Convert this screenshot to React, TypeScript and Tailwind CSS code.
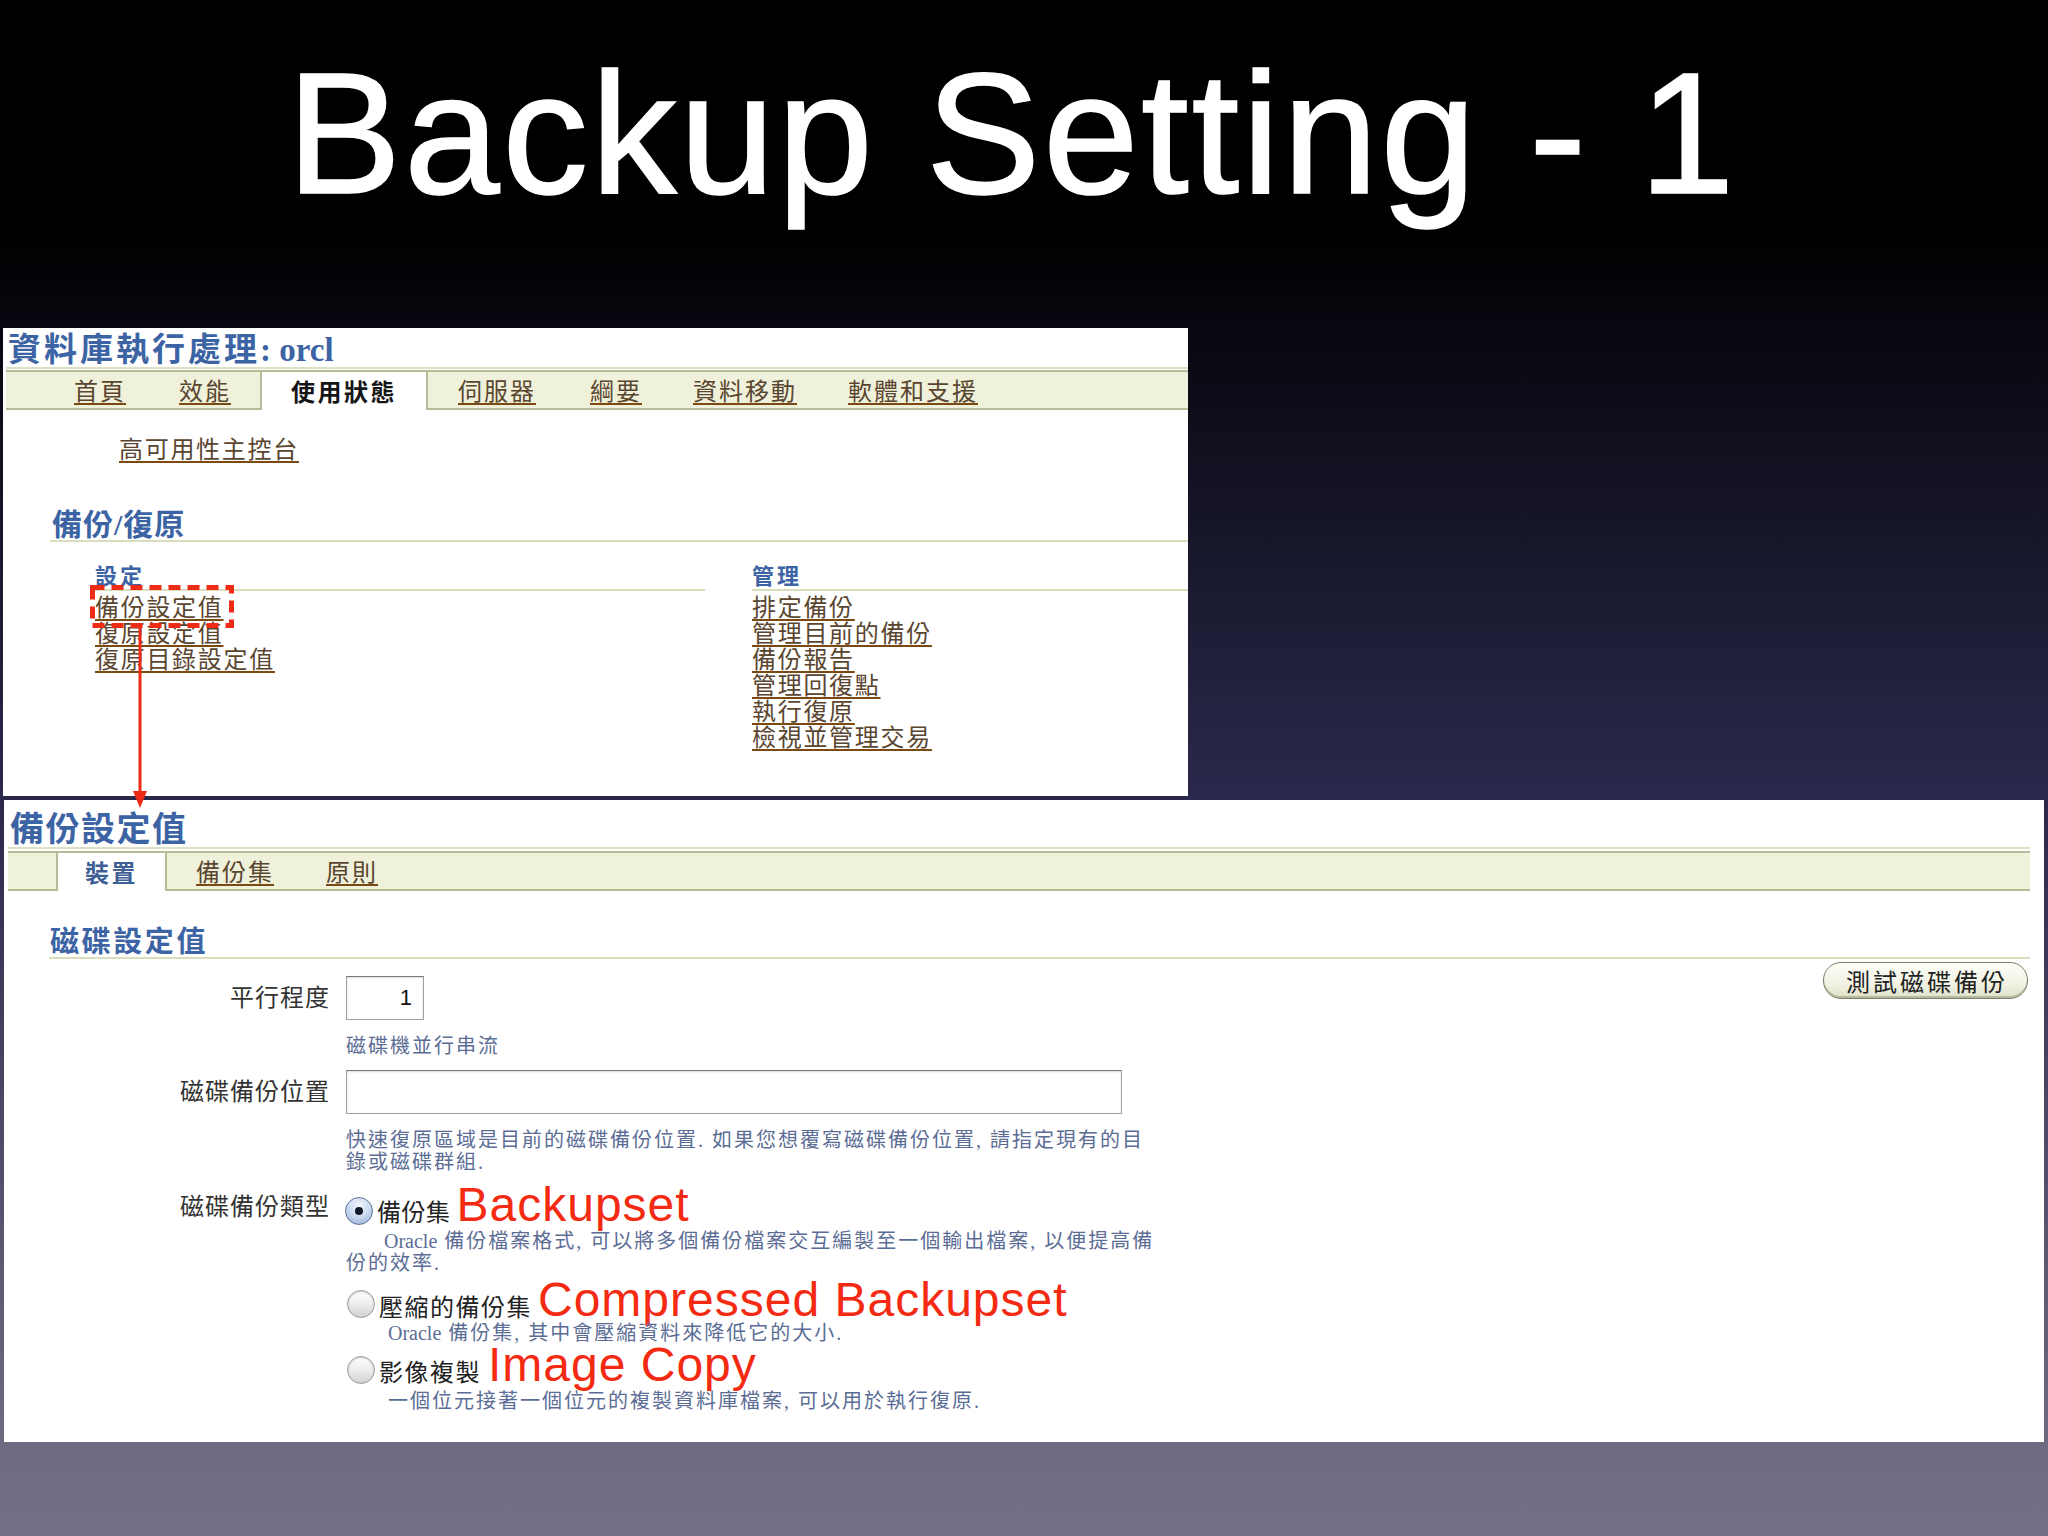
import React from 'react';

// ==================== SMALL PIECES ====================
function Link({ children }: { children: React.ReactNode }) {
  return (
    <span className="text-[#5a4630] underline decoration-[#7b4a13] decoration-[1.5px] underline-offset-[3px]">
      {children}
    </span>
  );
}

function Radio({ checked = false, className = '' }: { checked?: boolean; className?: string }) {
  if (checked) {
    return (
      <span
        className={`self-end w-[28px] h-[28px] shrink-0 rounded-full border border-[#5d7598] bg-[radial-gradient(circle_at_50%_30%,#f4f8ff_0%,#c4d5ee_55%,#8eaad3_100%)] flex items-center justify-center ${className}`}
      >
        <span className="w-[8px] h-[8px] rounded-full bg-[#111827]" />
      </span>
    );
  }
  return (
    <span
      className={`self-end w-[28px] h-[28px] shrink-0 rounded-full border border-[#9b9b9b] bg-[linear-gradient(180deg,#ffffff_0%,#ececec_50%,#d2d2d2_100%)] shadow-[inset_0_1px_2px_rgba(0,0,0,0.18)] ${className}`}
    />
  );
}

// ==================== TOP SCREENSHOT ====================
function TopPanel() {
  return (
    <div className="relative ml-[3px] mt-[109px] w-[1185px] h-[468px] bg-white font-['Liberation_Serif','Noto_Sans_CJK_TC',serif]">
      <div className="h-[39px] pl-[5px] pt-[5px] text-[33px] leading-[34px] font-bold text-[#3c64a4] whitespace-nowrap">
        <span className="tracking-[3px]">資料庫執行處理</span>: orcl
      </div>
      <div className="ml-[3px] h-[2px] bg-[#dde1c3]" />

      {/* tab bar */}
      <div className="mt-[1px] ml-[3px] h-[40px] border-y-2 border-[#b6bb98] bg-[#eff1da] flex text-[24px] leading-[26px] tracking-[2px] whitespace-nowrap">
        <div className="ml-[68px] pt-[4px] flex items-center"><Link>首頁</Link></div>
        <div className="ml-[53px] pt-[4px] flex items-center"><Link>效能</Link></div>
        <div className="ml-[29px] -mb-[2px] px-[29px] pt-[4px] flex items-center bg-white border-x-2 border-[#b6bb98] font-bold text-[#151515] tracking-[2.5px]">
          使用狀態
        </div>
        <div className="ml-[30px] pt-[4px] flex items-center"><Link>伺服器</Link></div>
        <div className="ml-[54px] pt-[4px] flex items-center"><Link>綱要</Link></div>
        <div className="ml-[51px] pt-[4px] flex items-center"><Link>資料移動</Link></div>
        <div className="ml-[51px] pt-[4px] flex items-center"><Link>軟體和支援</Link></div>
      </div>

      <div className="mt-[27px] ml-[116px] text-[24px] leading-[26px] tracking-[1.7px]">
        <Link>高可用性主控台</Link>
      </div>

      <div className="mt-[46px] ml-[47px] pl-[2px] border-b-2 border-[#d8ddbb] text-[30px] leading-[31px] font-bold text-[#3c64a4] tracking-[1px]">
        備份/復原
      </div>

      <div className="mt-[23px] flex">
        <div className="ml-[92px] w-[610px]">
          <div className="border-b-2 border-[#d8ddbb] text-[22px] leading-[24px] font-bold text-[#3c64a4] tracking-[3px]">設定</div>
          <div className="mt-[4px] text-[24px] leading-[26px] tracking-[1.7px]">
            <div><Link>備份設定值</Link></div>
            <div><Link>復原設定值</Link></div>
            <div><Link>復原目錄設定值</Link></div>
          </div>
        </div>
        <div className="ml-[47px] flex-1">
          <div className="border-b-2 border-[#d8ddbb] text-[22px] leading-[24px] font-bold text-[#3c64a4] tracking-[3px]">管理</div>
          <div className="mt-[4px] text-[24px] leading-[26px] tracking-[1.7px]">
            <div><Link>排定備份</Link></div>
            <div><Link>管理目前的備份</Link></div>
            <div><Link>備份報告</Link></div>
            <div><Link>管理回復點</Link></div>
            <div><Link>執行復原</Link></div>
            <div><Link>檢視並管理交易</Link></div>
          </div>
        </div>
      </div>

      {/* red dashed highlight */}
      <svg className="absolute left-[87px] top-[257px]" width="144" height="43" viewBox="0 0 144 43">
        <rect x="2.5" y="2.5" width="139" height="38" fill="none" stroke="#ee2c16" strokeWidth="5" strokeDasharray="12 7" />
      </svg>
    </div>
  );
}

// ==================== BOTTOM SCREENSHOT ====================
function BottomPanel() {
  return (
    <div className="ml-[4px] mt-[4px] w-[2040px] h-[642px] bg-white font-['Liberation_Serif','Noto_Sans_CJK_TC',serif]">
      <div className="h-[47px] pl-[6px] pt-[12px] text-[34px] leading-[35px] font-bold text-[#3c64a4] tracking-[1.5px]">備份設定值</div>
      <div className="ml-[4px] mr-[14px] h-[2px] bg-[#dde1c3]" />

      <div className="mt-[2px] ml-[4px] mr-[14px] h-[40px] border-y-2 border-[#b6bb98] bg-[#eff1da] flex text-[24px] leading-[26px] tracking-[2px] whitespace-nowrap">
        <div className="ml-[48px] -mb-[2px] px-[27px] pt-[4px] flex items-center bg-white border-x-2 border-[#b6bb98] font-bold text-[#3f5f97] tracking-[2.5px]">
          裝置
        </div>
        <div className="ml-[29px] pt-[4px] flex items-center"><Link>備份集</Link></div>
        <div className="ml-[52px] pt-[4px] flex items-center"><Link>原則</Link></div>
      </div>

      <div className="mt-[36px] ml-[45px] mr-[14px] pl-[1px] border-b-2 border-[#d8ddbb] text-[29px] leading-[30px] font-bold text-[#3c64a4] tracking-[2.6px]">
        磁碟設定值
      </div>

      <div className="flex justify-between items-start">
        {/* form */}
        <div className="text-[#333333]">
          <div className="mt-[17px] flex items-center h-[44px]">
            <div className="w-[326px] text-right text-[24px] leading-[26px] tracking-[1px]">平行程度</div>
            <div className="ml-[16px] w-[78px] h-[44px] border border-[#a0a0a0] border-t-[#7a7a7a] shadow-[inset_0_1px_2px_rgba(0,0,0,0.15)] bg-white text-right pr-[11px] font-['Liberation_Sans',sans-serif] text-[22px] leading-[42px] text-[#111]">
              1
            </div>
          </div>
          <div className="mt-[15px] ml-[342px] text-[20px] leading-[22px] tracking-[2px] text-[#5b6d95]">磁碟機並行串流</div>

          <div className="mt-[13px] flex items-center h-[44px]">
            <div className="w-[326px] text-right text-[24px] leading-[26px] tracking-[1px]">磁碟備份位置</div>
            <div className="ml-[16px] w-[776px] h-[44px] border border-[#a0a0a0] border-t-[#7a7a7a] shadow-[inset_0_1px_2px_rgba(0,0,0,0.15)] bg-white" />
          </div>
          <div className="mt-[15px] ml-[342px] text-[20px] leading-[22px] tracking-[2px] text-[#5b6d95] whitespace-nowrap">
            快速復原區域是目前的磁碟備份位置. 如果您想覆寫磁碟備份位置, 請指定現有的目
            <br />
            錄或磁碟群組.
          </div>

          <div className="mt-[12px] flex items-start">
            <div className="w-[326px] mt-[9px] text-right text-[24px] leading-[26px] tracking-[1px]">磁碟備份類型</div>
            <div className="ml-[16px] whitespace-nowrap">
              <div className="flex items-baseline">
                <Radio checked className="-ml-[1px] mb-[1px]" />
                <span className="ml-[4px] text-[24px] leading-[26px] tracking-[0.5px] text-[#222]">備份集</span>
                <span className="ml-[6px] font-['Liberation_Sans',Arial,sans-serif] text-[48px] leading-[40px] tracking-[1px] text-[#f52a12]">Backupset</span>
              </div>
              <div className="mt-[4px] indent-[38px] text-[20px] leading-[22px] tracking-[2px] text-[#5b6d95]">
                <span className="tracking-normal">Oracle</span> 備份檔案格式, 可以將多個備份檔案交互編製至一個輸出檔案, 以便提高備
                <br />
                份的效率.
              </div>

              <div className="mt-[6px] flex items-baseline">
                <Radio className="ml-[1px] mb-[3px]" />
                <span className="ml-[4px] text-[24px] leading-[26px] tracking-[1.5px] text-[#222]">壓縮的備份集</span>
                <span className="ml-[6px] font-['Liberation_Sans',Arial,sans-serif] text-[48px] leading-[40px] tracking-[1px] text-[#f52a12]">Compressed Backupset</span>
              </div>
              <div className="mt-[1px] pl-[42px] text-[20px] leading-[22px] tracking-[2px] text-[#5b6d95]">
                <span className="tracking-normal">Oracle</span> 備份集, 其中會壓縮資料來降低它的大小.
              </div>

              <div className="mt-[1px] flex items-baseline">
                <Radio className="ml-[1px] mb-[2px]" />
                <span className="ml-[4px] text-[24px] leading-[26px] tracking-[1.5px] text-[#222]">影像複製</span>
                <span className="ml-[7px] font-['Liberation_Sans',Arial,sans-serif] text-[48px] leading-[40px] tracking-[1px] text-[#f52a12]">Image Copy</span>
              </div>
              <div className="mt-[4px] pl-[42px] text-[20px] leading-[22px] tracking-[2px] text-[#5b6d95]">
                一個位元接著一個位元的複製資料庫檔案, 可以用於執行復原.
              </div>
            </div>
          </div>
        </div>

        <button className="mt-[3px] mr-[16px] w-[205px] h-[37px] rounded-[18px] border border-[#7d806a] bg-[linear-gradient(180deg,#fdfdf6_0%,#f1f2e3_60%,#dfe1c9_100%)] shadow-[inset_0_-2px_0_#b7ba9c] font-['Noto_Sans_CJK_TC',sans-serif] text-[24px] leading-[34px] tracking-[3px] text-[#222] pl-[3px]">
          測試磁碟備份
        </button>
      </div>
    </div>
  );
}

// ==================== SLIDE ====================
export default function App() {
  return (
    <div className="relative w-[2048px] h-[1536px] overflow-hidden flex flex-col bg-[linear-gradient(180deg,#000000_0%,#000000_15%,#07070f_21%,#2a294c_52%,#6d6b82_94%,#737187_100%)]">
      <h1 className="h-[219px] pt-[47px] pr-[24px] text-center text-white font-['Liberation_Sans',Arial,sans-serif] text-[172px] leading-[172px] tracking-[2.5px] font-normal whitespace-nowrap [-webkit-text-stroke:1.5px_white]">
        Backup Setting - 1
      </h1>

      <TopPanel />
      <BottomPanel />

      {/* arrow from the highlighted link down to the detail page */}
      <svg className="absolute left-[132px] top-[627px]" width="16" height="181" viewBox="0 0 16 181">
        <line x1="8" y1="0" x2="8" y2="166" stroke="#ee2c16" strokeWidth="3" />
        <polygon points="1,164 15,164 8,181" fill="#ee2c16" />
      </svg>
    </div>
  );
}
